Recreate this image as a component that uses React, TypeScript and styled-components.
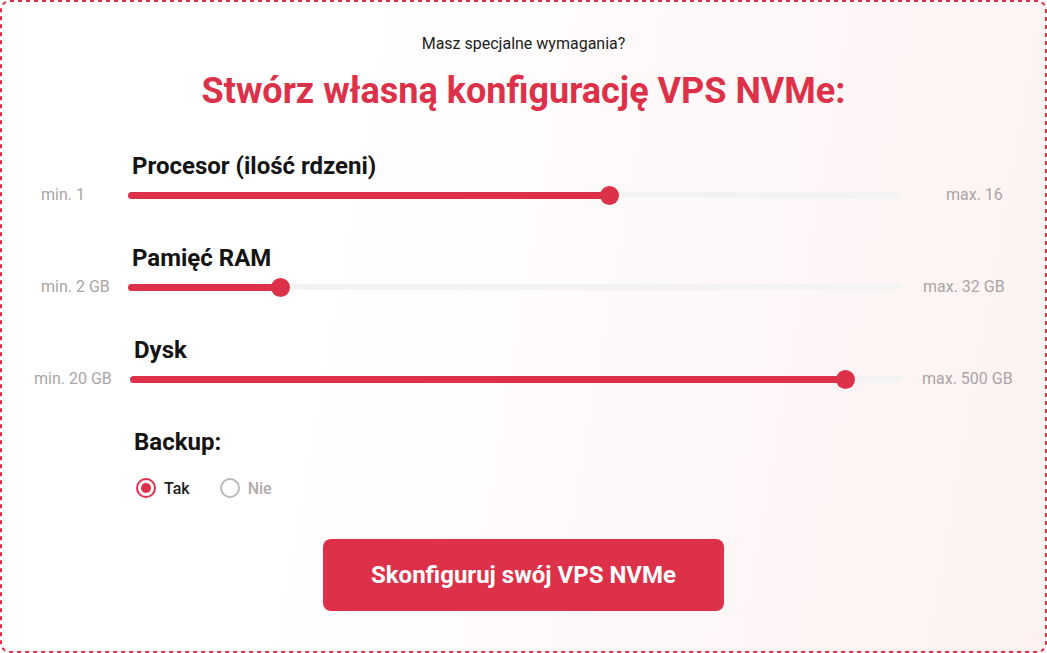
import React from "react";
import styled, { createGlobalStyle } from "styled-components";

const Global = createGlobalStyle`
  html, body { margin: 0; padding: 0; }
  body { font-family: Roboto, "Noto Sans", Arial, sans-serif; background: #fff; }
  * { box-sizing: border-box; }
`;

const RED = "#dd3149";

const Card = styled.div`
  position: relative;
  width: 1047px;
  height: 653px;
  border: 2px solid transparent;
  border-radius: 10px;
  background: linear-gradient(100deg, #ffffff 0%, #ffffff 30%, #fdf1f1 100%);
  background-origin: border-box;
  display: flex;
  flex-direction: column;
  padding-top: 32px;
`;

const DashedFrame = styled.svg`
  position: absolute;
  top: -2px;
  left: -2px;
  width: 1047px;
  height: 653px;
  pointer-events: none;
`;

const Subtitle = styled.div`
  text-align: center;
  font-size: 16px;
  line-height: 20px;
  color: #1d1d1d;
`;

const Title = styled.h1`
  margin: 15px 0 0;
  text-align: center;
  font-size: 36px;
  line-height: 44px;
  font-weight: 700;
  color: ${RED};
`;

const Sliders = styled.div`
  display: flex;
  flex-direction: column;
  gap: 39px;
  margin-top: 39px;
`;

const Block = styled.div<{ $left: number; $right: number }>`
  display: grid;
  grid-template-columns: ${(p) => p.$left}px 1fr ${(p) => p.$right}px;
  grid-template-rows: 28px 20px;
  row-gap: 5px;
  align-items: center;
`;

const Label = styled.div`
  grid-column: 2;
  grid-row: 1;
  padding-left: 4px;
  font-size: 24px;
  line-height: 28px;
  font-weight: 700;
  color: #141414;
`;

const MinLabel = styled.div<{ $pad: number }>`
  grid-column: 1;
  grid-row: 2;
  padding-left: ${(p) => p.$pad}px;
  font-size: 16px;
  line-height: 20px;
  color: #aaa5a5;
  white-space: nowrap;
`;

const MaxLabel = styled(MinLabel)`
  grid-column: 3;
`;

const Track = styled.div`
  grid-column: 2;
  grid-row: 2;
  position: relative;
  height: 6px;
  border-radius: 3px;
  background: #f3f3f3;
`;

const Fill = styled.div`
  position: absolute;
  left: 0;
  top: -0.5px;
  height: 7px;
  border-radius: 4px;
  background: ${RED};
`;

const Thumb = styled.div`
  position: absolute;
  top: 50%;
  width: 19px;
  height: 19px;
  margin-left: -9.5px;
  margin-top: -9.5px;
  border-radius: 50%;
  background: ${RED};
`;

const Backup = styled.div`
  margin-top: 39px;
  padding-left: 132px;
  display: flex;
  flex-direction: column;
  gap: 22px;
`;

const BackupTitle = styled.div`
  font-size: 24px;
  line-height: 28px;
  font-weight: 700;
  color: #141414;
`;

const Radios = styled.div`
  display: flex;
  align-items: center;
  gap: 30px;
  height: 20px;
  padding-left: 2px;
`;

const RadioItem = styled.label<{ $on?: boolean }>`
  display: flex;
  align-items: center;
  gap: 8px;
  font-size: 16px;
  font-weight: 500;
  color: ${(p) => (p.$on ? "#1d1d1d" : "#b0abab")};
`;

const RadioCircle = styled.span<{ $on?: boolean }>`
  width: 20px;
  height: 20px;
  border-radius: 50%;
  border: 2px solid ${(p) => (p.$on ? RED : "#bdb7b7")};
  display: flex;
  align-items: center;
  justify-content: center;
  &::after {
    content: "";
    width: 10px;
    height: 10px;
    border-radius: 50%;
    background: ${(p) => (p.$on ? RED : "transparent")};
  }
`;

const ButtonRow = styled.div`
  display: flex;
  justify-content: center;
  margin-top: 41px;
`;

const Button = styled.button`
  width: 401px;
  height: 72px;
  border: none;
  border-radius: 8px;
  background: ${RED};
  color: #fff;
  font-family: Roboto, Arial, sans-serif;
  font-size: 24px;
  font-weight: 700;
  cursor: pointer;
`;

const sliders = [
  { label: "Procesor (ilość rdzeni)", min: "min. 1", max: "max. 16", frac: 0.623, left: 126, right: 144, minPad: 39, maxPad: 45 },
  { label: "Pamięć RAM", min: "min. 2 GB", max: "max. 32 GB", frac: 0.197, left: 126, right: 144, minPad: 39, maxPad: 22 },
  { label: "Dysk", min: "min. 20 GB", max: "max. 500 GB", frac: 0.925, left: 128, right: 142, minPad: 32, maxPad: 19 },
];

export default function App() {
  return (
    <>
      <Global />
      <Card>
        <DashedFrame viewBox="0 0 1047 653">
          <rect
            x="1"
            y="1"
            width="1045"
            height="651"
            rx="9"
            fill="none"
            stroke={RED}
            strokeWidth="2"
            strokeDasharray="4 4"
          />
        </DashedFrame>
        <Subtitle>Masz specjalne wymagania?</Subtitle>
        <Title>Stwórz własną konfigurację VPS NVMe:</Title>
        <Sliders>
          {sliders.map((s) => (
            <Block key={s.label} $left={s.left} $right={s.right}>
              <Label>{s.label}</Label>
              <MinLabel $pad={s.minPad}>{s.min}</MinLabel>
              <Track>
                <Fill style={{ width: `${s.frac * 100}%` }} />
                <Thumb style={{ left: `${s.frac * 100}%` }} />
              </Track>
              <MaxLabel $pad={s.maxPad}>{s.max}</MaxLabel>
            </Block>
          ))}
        </Sliders>
        <Backup>
          <BackupTitle>Backup:</BackupTitle>
          <Radios>
            <RadioItem $on>
              <RadioCircle $on />
              Tak
            </RadioItem>
            <RadioItem>
              <RadioCircle />
              Nie
            </RadioItem>
          </Radios>
        </Backup>
        <ButtonRow>
          <Button>Skonfiguruj swój VPS NVMe</Button>
        </ButtonRow>
      </Card>
    </>
  );
}
